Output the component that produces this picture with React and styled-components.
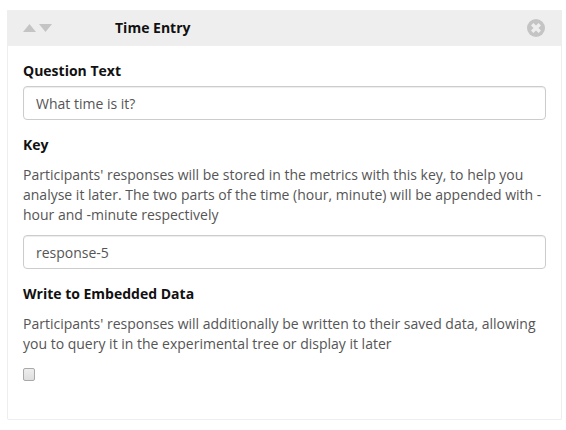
import React from "react";
import styled, { createGlobalStyle } from "styled-components";

const Global = createGlobalStyle`
  html, body { margin: 0; padding: 0; background: #fff; }
  body { font-family: "Open Sans", "Liberation Sans", sans-serif; font-size: 14px; line-height: 20px; color: #333; }
  * { box-sizing: border-box; }
`;
const Page = styled.div`
  padding: 10px 4px 10px 7px;
`;
const Panel = styled.section`
  height: 410px;
  border: 1px solid #eee;
  border-top: 0;
  border-radius: 2px;
  background: #fff;
`;
const Header = styled.header`
  height: 36px;
  margin: 0 -1px;
  background: #eee;
  display: flex;
  align-items: center;
  padding: 0 17px 0 16px;
`;
const Arrows = styled.div`
  display: flex;
  gap: 3px;
  width: 92px;
  flex: none;
`;
const Arrow = styled.svg`
  width: 13px;
  height: 8px;
  fill: #c4c4c4;
  display: block;
`;
const Title = styled.h3`
  margin: 0;
  flex: 1;
  font-size: 14px;
  font-weight: 700;
  line-height: 20px;
  color: #111;
`;
const Close = styled.svg`
  width: 18px;
  height: 18px;
  display: block;
`;
const Body = styled.div`
  padding: 15px 15px 0;
`;
const Group = styled.div`
  margin-bottom: 15px;
`;
const Label = styled.label`
  display: block;
  font-weight: 700;
  margin-bottom: 5px;
  color: #111;
`;
const Input = styled.input`
  display: block;
  width: 100%;
  height: 34px;
  padding: 6px 12px;
  border: 1px solid #ccc;
  border-radius: 4px;
  font: inherit;
  color: #555;
  background: #fff;
  box-shadow: inset 0 1px 1px rgba(0,0,0,.075);
  outline: none;
`;
const Help = styled.p`
  margin: 10px 0;
  color: #555;
`;
const Check = styled.input`
  display: block;
  appearance: none;
  width: 12px;
  height: 13px;
  margin: 14px 0 0;
  border: 1px solid #a9a9a9;
  border-radius: 2px;
  background: linear-gradient(#eee, #dedede);
`;

export default function App() {
  return (
    <Page>
      <Global />
      <Panel>
        <Header>
          <Arrows>
            <Arrow viewBox="0 0 13 8"><path d="M0 8 6.5 0 13 8z" /></Arrow>
            <Arrow viewBox="0 0 13 8"><path d="M0 0 6.5 8 13 0z" /></Arrow>
          </Arrows>
          <Title>Time Entry</Title>
          <Close viewBox="0 0 18 18">
            <circle cx="9" cy="9" r="9" fill="#c4c4c4" />
            <path d="M5.2 5.2 12.8 12.8M12.8 5.2 5.2 12.8" stroke="#eee" strokeWidth="3.4" strokeLinecap="butt" />
          </Close>
        </Header>
        <Body>
          <Group>
            <Label>Question Text</Label>
            <Input readOnly value="What time is it?" />
          </Group>
          <Group>
            <Label>Key</Label>
            <Help>Participants' responses will be stored in the metrics with this key, to help you analyse it later. The two parts of the time (hour, minute) will be appended with -hour and -minute respectively</Help>
            <Input readOnly value="response-5" />
          </Group>
          <Group>
            <Label>Write to Embedded Data</Label>
            <Help>Participants' responses will additionally be written to their saved data, allowing you to query it in the experimental tree or display it later</Help>
            <Check type="checkbox" />
          </Group>
        </Body>
      </Panel>
    </Page>
  );
}
